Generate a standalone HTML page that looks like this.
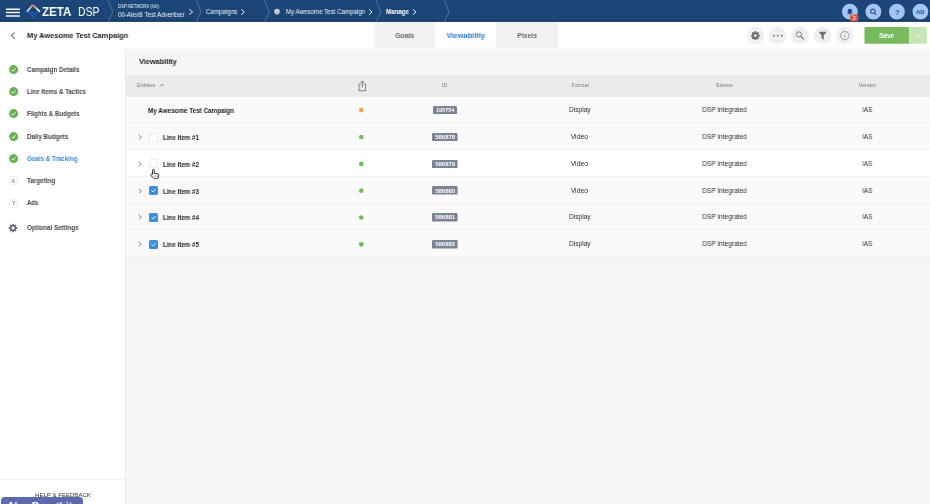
<!DOCTYPE html>
<html>
<head>
<meta charset="utf-8">
<style>
*{box-sizing:border-box;margin:0;padding:0}
html,body{width:930px;height:504px;overflow:hidden;background:#f6f6f6;font-family:"Liberation Sans",sans-serif;color:#222}
.abs{position:absolute}
.tx{position:absolute;white-space:nowrap;will-change:transform}
#nav{position:absolute;left:0;top:0;width:930px;height:22px;background:linear-gradient(to bottom,#1c4677 0,#1c4677 20px,#183a66 20px,#183a66 21px,#2e4a70 21px,#2e4a70 22px)}
#sub{position:absolute;left:0;top:22px;width:930px;height:27px;background:#fdfdfc}
.tab{position:absolute;top:22px;height:26px;background:#f1f2f3}
#side{position:absolute;left:0;top:49px;width:125px;height:455px;background:#fff}
#main{position:absolute;left:125px;top:49px;width:805px;height:455px;background:#f5f6f6;border-left:1px solid #ececed}
.hrow{position:absolute;left:126px;top:74.8px;width:804px;height:21.8px;background:#ebebec}
.row{position:absolute;left:126px;width:804px;border-bottom:1px solid #f1f1f2}
.dot{position:absolute;width:5px;height:5px;border-radius:50%}
.id{position:absolute;background:#747d8a;border-radius:1px}
.num{position:absolute;left:9px;width:9px;height:9px;border-radius:50%;border:1px solid #dcdde0}
</style>
</head>
<body>
<div id="nav"></div>
<div id="sub"></div>
<div id="side"></div>
<div id="main"></div>

<svg class="abs" style="left:0;top:0" width="930" height="22" viewBox="0 0 930 22">
  <g stroke="#f4f8fd" stroke-width="1.5" fill="none"><path d="M5.9 9.2H19.9M5.9 12.6H19.9M5.9 15.9H19.9"/></g>
  <defs>
    <linearGradient id="lgL" x1="27" y1="11.6" x2="32.7" y2="4.6" gradientUnits="userSpaceOnUse"><stop offset="0" stop-color="#b9d6fa"/><stop offset="0.4" stop-color="#dfe3ef"/><stop offset="0.7" stop-color="#dd9a98"/><stop offset="1" stop-color="#d07f80"/></linearGradient>
    <linearGradient id="lgR" x1="39.8" y1="11.6" x2="32.7" y2="4.6" gradientUnits="userSpaceOnUse"><stop offset="0" stop-color="#ffffff"/><stop offset="0.3" stop-color="#f6e4de"/><stop offset="0.65" stop-color="#e39b93"/><stop offset="1" stop-color="#d07f80"/></linearGradient>
  </defs>
  <path d="M27.4 11.9 H39.4 L32.6 17.9 Z" fill="#2250ad"/>
  <path d="M27 11.7 L32.7 4.8" stroke="url(#lgL)" stroke-width="1.8" fill="none"/>
  <path d="M39.9 11.7 L32.7 4.8" stroke="url(#lgR)" stroke-width="1.8" fill="none"/>
  <g stroke="#5a7ba6" stroke-width="0.8" fill="none">
    <path d="M108 0 L112.8 11.6 L108.4 21"/>
    <path d="M196.2 0 L201 11.6 L196.8 21"/>
    <path d="M264.2 0 L269.4 11.6 L264.8 21"/>
    <path d="M376 0 L380.8 11.6 L376.6 21"/>
    <path d="M444.2 0 L449 11.6 L444.8 21"/>
  </g>
  <g stroke="#e9eff7" stroke-width="0.95" fill="none">
    <path d="M189.2 9.2 L192.6 11.9 L189.2 14.6"/>
    <path d="M241.2 9.3 L244.4 12 L241.2 14.7"/>
    <path d="M369.1 9.4 L372 12 L369.1 14.7"/>
    <path d="M413 9.3 L416 12 L413 14.7"/>
  </g>
  <circle cx="277" cy="11.6" r="2.8" fill="#c6cbd4"/>
  <g fill="#a4c5f4"><circle cx="849.9" cy="11.7" r="7.9"/><circle cx="873.4" cy="11.7" r="7.9"/><circle cx="896.9" cy="11.7" r="7.9"/><circle cx="920.4" cy="11.7" r="7.9"/></g>
  <path d="M849.9 8.7 c-1.5 0 -2.2 1.1 -2.2 2.5 v1.5 l-0.8 1 h6 l-0.8 -1 v-1.5 c0 -1.4 -0.7 -2.5 -2.2 -2.5z M849.1 14.2 a0.8 0.8 0 0 0 1.6 0z" fill="#234d86"/>
  <rect x="850" y="14.3" width="8.3" height="7" rx="2.6" fill="#d8574f"/>
  <rect x="850.6" y="13.6" width="3.6" height="2" rx="1" fill="#e8a7a8" opacity="0.8"/>
  <circle cx="872.8" cy="11.3" r="2.2" stroke="#2a5691" stroke-width="1.1" fill="none"/>
  <path d="M874.4 12.9 L876.3 14.8" stroke="#2a5691" stroke-width="1.2"/>
</svg>
<div class="tx" style="left:42.30px;top:5px;font-size:12px;line-height:14px;font-weight:bold;color:#fff;transform:scaleX(0.9625);transform-origin:0 50%;">ZETA</div>
<div class="tx" style="left:77.70px;top:5px;font-size:12px;line-height:14px;font-weight:normal;color:#fff;transform:scaleX(0.8632);transform-origin:0 50%;">DSP</div>
<div class="tx" style="left:118.00px;top:4px;font-size:4.8px;line-height:5px;font-weight:normal;color:#eef3f9;transform:scaleX(0.8752);transform-origin:0 50%;">DSP NETWORK (NA)</div>
<div class="tx" style="left:118.00px;top:11px;font-size:6.6px;line-height:7px;font-weight:normal;color:#eef3f9;transform:scaleX(0.9306);transform-origin:0 50%;">00-AlexB Test Advertiser</div>
<div class="tx" style="left:205.90px;top:8px;font-size:6.6px;line-height:7px;font-weight:normal;color:#eef3f9;transform:scaleX(0.9406);transform-origin:0 50%;">Campaigns</div>
<div class="tx" style="left:285.75px;top:8px;font-size:6.6px;line-height:7px;font-weight:normal;color:#eef3f9;transform:scaleX(0.9338);transform-origin:0 50%;">My Awesome Test Campaign</div>
<div class="tx" style="left:385.80px;top:8px;font-size:6.6px;line-height:7px;font-weight:bold;color:#fff;transform:scaleX(0.9319);transform-origin:0 50%;">Manage</div>
<div class="tx" style="left:853.02px;top:16px;font-size:4.6px;line-height:5px;font-weight:bold;color:#ffe1b8;">2</div>
<div class="tx" style="left:894.52px;top:8px;font-size:7.8px;line-height:9px;font-weight:bold;color:#2f5d99;">?</div>
<div class="tx" style="left:916.07px;top:9px;font-size:6px;line-height:6px;font-weight:bold;color:#2a5691;transform:scaleX(0.9462);transform-origin:50% 50%;">AB</div>
<div class="tab" style="left:373.6px;width:61.2px"></div>
<div class="tab" style="left:496px;width:62px"></div>
<svg class="abs" style="left:0;top:22px" width="930" height="27" viewBox="0 22 930 27">
  <path d="M14.7 32.3 L11.4 35.6 L14.7 38.9" stroke="#6e6e6e" stroke-width="1.1" fill="none"/>
  <g fill="#eeeff1">
    <circle cx="755.4" cy="35.6" r="8.5"/><circle cx="777.8" cy="35.6" r="8.5"/><circle cx="800.3" cy="35.6" r="8.5"/><circle cx="822.5" cy="35.6" r="8.5"/><circle cx="844.8" cy="35.6" r="8.5"/>
  </g>
  <g transform="translate(755.4 35.6)">
    <g fill="#666a71">
      <circle r="3.2"/>
      <rect x="-0.95" y="-4.4" width="1.9" height="8.8" rx="0.3"/>
      <rect x="-0.95" y="-4.4" width="1.9" height="8.8" rx="0.3" transform="rotate(45)"/>
      <rect x="-0.95" y="-4.4" width="1.9" height="8.8" rx="0.3" transform="rotate(90)"/>
      <rect x="-0.95" y="-4.4" width="1.9" height="8.8" rx="0.3" transform="rotate(135)"/>
    </g>
    <circle r="1.5" fill="#eeeff1"/>
  </g>
  <g fill="#666"><circle cx="773.9" cy="35.7" r="0.85"/><circle cx="777.8" cy="35.7" r="0.85"/><circle cx="781.7" cy="35.7" r="0.85"/></g>
  <circle cx="798.9" cy="34.4" r="2.6" stroke="#6a6a6a" stroke-width="0.85" fill="none"/>
  <path d="M800.8 36.3 L804 39.4" stroke="#6a6a6a" stroke-width="1.05"/>
  <path d="M818.6 31.7 H826.7 L823.7 35.4 V39.8 L821.6 38.6 V35.4 Z" fill="#6a6d73"/>
  <circle cx="844.8" cy="35.6" r="4.2" stroke="#777" stroke-width="0.65" fill="none"/>
  <path d="M844.8 35 V37.9" stroke="#888" stroke-width="0.7"/><circle cx="844.8" cy="33.7" r="0.45" fill="#888"/>
  <rect x="864.5" y="27" width="46" height="16.8" rx="1.2" fill="#78bb5e"/>
  <path d="M908.9 27 H925.6 a1.2 1.2 0 0 1 1.2 1.2 V42.6 a1.2 1.2 0 0 1 -1.2 1.2 H908.9 Z" fill="#c6e5b9"/>
  <path d="M917 35.1 L918.4 36.4 L919.8 35.1" stroke="#f2faee" stroke-width="0.8" fill="none"/>
</svg>
<div class="tx" style="left:26.70px;top:31px;font-size:7.7px;line-height:9px;font-weight:bold;color:#1d1d1d;transform:scaleX(0.9636);transform-origin:0 50%;">My Awesome Test Campaign</div>
<div class="tx" style="left:393.70px;top:31px;font-size:7.7px;line-height:9px;font-weight:bold;color:#696969;transform:scaleX(0.9067);transform-origin:50% 50%;">Goals</div>
<div class="tx" style="left:445.77px;top:31px;font-size:7.7px;line-height:9px;font-weight:bold;color:#2f7fd6;transform:scaleX(0.9758);transform-origin:50% 50%;">Viewability</div>
<div class="tx" style="left:516.07px;top:31px;font-size:7.7px;line-height:9px;font-weight:bold;color:#696969;transform:scaleX(0.8849);transform-origin:50% 50%;">Pixels</div>
<div class="tx" style="left:879.11px;top:32px;font-size:6.5px;line-height:7px;font-weight:bold;color:#fff;transform:scaleX(0.9815);transform-origin:50% 50%;">Save</div>
<svg class="abs" style="left:8.70px;top:64.60px" width="9.2" height="9.2" viewBox="0 0 9.2 9.2"><circle cx="4.6" cy="4.6" r="4.5" fill="#67b353"/><path d="M2.6 4.7 L4 6.1 L6.7 3.3" stroke="#fff" stroke-width="1" fill="none"/></svg>
<div class="tx" style="left:26.80px;top:66px;font-size:6.5px;line-height:7px;font-weight:bold;color:#444;transform:scaleX(0.9625);transform-origin:0 50%;">Campaign Details</div>
<svg class="abs" style="left:8.70px;top:87.00px" width="9.2" height="9.2" viewBox="0 0 9.2 9.2"><circle cx="4.6" cy="4.6" r="4.5" fill="#67b353"/><path d="M2.6 4.7 L4 6.1 L6.7 3.3" stroke="#fff" stroke-width="1" fill="none"/></svg>
<div class="tx" style="left:26.80px;top:88px;font-size:6.5px;line-height:7px;font-weight:bold;color:#444;transform:scaleX(0.9427);transform-origin:0 50%;">Line Items &amp; Tactics</div>
<svg class="abs" style="left:8.70px;top:109.40px" width="9.2" height="9.2" viewBox="0 0 9.2 9.2"><circle cx="4.6" cy="4.6" r="4.5" fill="#67b353"/><path d="M2.6 4.7 L4 6.1 L6.7 3.3" stroke="#fff" stroke-width="1" fill="none"/></svg>
<div class="tx" style="left:26.80px;top:110px;font-size:6.5px;line-height:7px;font-weight:bold;color:#444;transform:scaleX(0.9441);transform-origin:0 50%;">Flights &amp; Budgets</div>
<svg class="abs" style="left:8.70px;top:131.90px" width="9.2" height="9.2" viewBox="0 0 9.2 9.2"><circle cx="4.6" cy="4.6" r="4.5" fill="#67b353"/><path d="M2.6 4.7 L4 6.1 L6.7 3.3" stroke="#fff" stroke-width="1" fill="none"/></svg>
<div class="tx" style="left:26.80px;top:133px;font-size:6.5px;line-height:7px;font-weight:bold;color:#444;transform:scaleX(0.9552);transform-origin:0 50%;">Daily Budgets</div>
<svg class="abs" style="left:8.70px;top:154.20px" width="9.2" height="9.2" viewBox="0 0 9.2 9.2"><circle cx="4.6" cy="4.6" r="4.5" fill="#67b353"/><path d="M2.6 4.7 L4 6.1 L6.7 3.3" stroke="#fff" stroke-width="1" fill="none"/></svg>
<div class="tx" style="left:26.80px;top:155px;font-size:6.5px;line-height:7px;font-weight:bold;color:#3a89de;transform:scaleX(0.9491);transform-origin:0 50%;">Goals &amp; Tracking</div>
<svg class="abs" style="left:8.70px;top:176.30px" width="9.2" height="9.2" viewBox="0 0 9.2 9.2"><circle cx="4.6" cy="4.6" r="4.1" fill="#fff" stroke="#e0e1e6" stroke-width="0.7"/></svg>
<div class="tx" style="left:11.85px;top:178px;font-size:5.2px;line-height:6px;font-weight:normal;color:#555;">6</div>
<div class="tx" style="left:26.80px;top:177px;font-size:6.5px;line-height:7px;font-weight:bold;color:#444;transform:scaleX(0.9646);transform-origin:0 50%;">Targeting</div>
<svg class="abs" style="left:8.70px;top:198.70px" width="9.2" height="9.2" viewBox="0 0 9.2 9.2"><circle cx="4.6" cy="4.6" r="4.1" fill="#fff" stroke="#e0e1e6" stroke-width="0.7"/></svg>
<div class="tx" style="left:11.85px;top:200px;font-size:5.2px;line-height:6px;font-weight:normal;color:#555;">7</div>
<div class="tx" style="left:26.80px;top:199px;font-size:6.5px;line-height:7px;font-weight:bold;color:#444;transform:scaleX(0.9039);transform-origin:0 50%;">Ads</div>
<svg class="abs" style="left:8.40px;top:222.70px" width="10" height="10" viewBox="-5 -5 10 10"><g fill="#6a707b"><circle r="3.1"/><rect x="-0.95" y="-4.3" width="1.9" height="8.6" rx="0.3"/><rect x="-0.95" y="-4.3" width="1.9" height="8.6" rx="0.3" transform="rotate(45)"/><rect x="-0.95" y="-4.3" width="1.9" height="8.6" rx="0.3" transform="rotate(90)"/><rect x="-0.95" y="-4.3" width="1.9" height="8.6" rx="0.3" transform="rotate(135)"/></g><circle r="1.4" fill="#fff"/></svg>
<div class="tx" style="left:26.80px;top:224px;font-size:6.5px;line-height:7px;font-weight:bold;color:#444;transform:scaleX(0.9571);transform-origin:0 50%;">Optional Settings</div>
<div class="abs" style="left:0;top:479px;width:125px;height:1px;background:#f1f2f3"></div>
<div class="tx" style="left:34.70px;top:492px;font-size:6px;line-height:6px;font-weight:normal;color:#333;transform:scaleX(1.0119);transform-origin:0 50%;">HELP &amp; FEEDBACK</div>
<div class="abs" style="left:0;top:497px;width:100px;height:7px;overflow:hidden"><div class="abs" style="left:1px;top:0.3px;width:82.4px;height:10px;background:#5e69ae;border-radius:3.5px 3.5px 0 0"></div><div class="tx" style="left:6.80px;top:3px;font-size:11.1px;line-height:12px;font-weight:bold;color:#fff;transform:scaleX(0.9356);transform-origin:0 50%;">Alex Brunthit</div></div>
<div class="tx" style="left:138.60px;top:57px;font-size:7.9px;line-height:9px;font-weight:bold;color:#1d1d1d;transform:scaleX(0.9290);transform-origin:0 50%;">Viewability</div>
<div class="hrow"></div>
<div class="tx" style="left:137.20px;top:82px;font-size:5.3px;line-height:6px;font-weight:normal;color:#777;transform:scaleX(1.0414);transform-origin:0 50%;">Entities</div>
<svg class="abs" style="left:158.8px;top:83.4px" width="6" height="4" viewBox="0 0 6 4"><path d="M1 3.2 L3 1.2 L5 3.2" stroke="#3b7fd0" stroke-width="0.8" fill="none"/></svg>
<svg class="abs" style="left:357px;top:79.6px" width="10.4" height="12" viewBox="357 79.6 10.4 12"><path d="M360.7 83.7 H359 V90.4 H365.6 V83.7 H363.9 M362.3 87.4 V80.7 M360.7 82.3 L362.3 80.7 L363.9 82.3" stroke="#555b66" stroke-width="0.75" fill="none"/></svg>
<div class="tx" style="left:442.05px;top:82px;font-size:5.3px;line-height:6px;font-weight:normal;color:#777;transform:scaleX(1.0189);transform-origin:50% 50%;">ID</div>
<div class="tx" style="left:571.61px;top:82px;font-size:5.3px;line-height:6px;font-weight:normal;color:#777;transform:scaleX(1.0187);transform-origin:50% 50%;">Format</div>
<div class="tx" style="left:715.70px;top:82px;font-size:5.3px;line-height:6px;font-weight:normal;color:#777;transform:scaleX(1.0242);transform-origin:50% 50%;">Source</div>
<div class="tx" style="left:858.50px;top:82px;font-size:5.3px;line-height:6px;font-weight:normal;color:#777;transform:scaleX(1.0596);transform-origin:50% 50%;">Vendor</div>
<div class="row" style="top:96.6px;height:26.4px;background:#fafafa"></div>
<div class="tx" style="left:148.10px;top:107px;font-size:6.6px;line-height:7px;font-weight:bold;color:#1d1d1d;transform:scaleX(0.9545);transform-origin:0 50%;">My Awesome Test Campaign</div>
<svg class="abs" style="left:358px;top:107px" width="7" height="7" viewBox="358 107 7 7"><circle cx="361.3" cy="110.1" r="2.35" fill="#f0a24f"/></svg>
<svg class="abs" style="left:433.00px;top:105.80px" width="24" height="8.6"><rect width="24" height="8.6" rx="1.2" fill="#7b8494"/></svg>
<div class="tx" style="left:435.82px;top:107px;font-size:5.5px;line-height:6px;font-weight:bold;color:#fff;transform:scaleX(0.9807);transform-origin:50% 50%;">195754</div>
<div class="tx" style="left:568.88px;top:106px;font-size:6.6px;line-height:7px;font-weight:normal;color:#2b2b2b;">Display</div>
<div class="tx" style="left:701.60px;top:106px;font-size:6.6px;line-height:7px;font-weight:normal;color:#2b2b2b;transform:scaleX(0.9842);transform-origin:50% 50%;">DSP Integrated</div>
<div class="tx" style="left:861.68px;top:106px;font-size:6.6px;line-height:7px;font-weight:normal;color:#2b2b2b;transform:scaleX(0.9400);transform-origin:50% 50%;">IAS</div>
<div class="row" style="top:123px;height:27.0px;background:#fafafa"></div>
<svg class="abs" style="left:137.6px;top:133.8px" width="5" height="6.4" viewBox="0 0 5 6.4"><path d="M0.8 0.8 L3.3 3.2 L0.8 5.6" stroke="#6b6f78" stroke-width="0.85" fill="none"/></svg>
<svg class="abs" style="left:149.1px;top:132.5px" width="9" height="9" viewBox="0 0 9 9"><rect x="0.4" y="0.4" width="8.2" height="8.2" rx="1.4" fill="#fff" stroke="#e1e2e6" stroke-width="0.8"/></svg>
<div class="tx" style="left:162.60px;top:134px;font-size:6.6px;line-height:7px;font-weight:bold;color:#1d1d1d;transform:scaleX(0.9411);transform-origin:0 50%;">Line Item #1</div>
<svg class="abs" style="left:358px;top:134px" width="7" height="7" viewBox="358 134 7 7"><circle cx="361.3" cy="137" r="2.35" fill="#6cbd55"/></svg>
<svg class="abs" style="left:432.20px;top:132.70px" width="25.6" height="8.6"><rect width="25.6" height="8.6" rx="1.2" fill="#7b8494"/></svg>
<div class="tx" style="left:435.82px;top:134px;font-size:5.5px;line-height:6px;font-weight:bold;color:#fff;transform:scaleX(1.0897);transform-origin:50% 50%;">586878</div>
<div class="tx" style="left:571.32px;top:133px;font-size:6.6px;line-height:7px;font-weight:normal;color:#2b2b2b;transform:scaleX(1.0381);transform-origin:50% 50%;">Video</div>
<div class="tx" style="left:701.60px;top:133px;font-size:6.6px;line-height:7px;font-weight:normal;color:#2b2b2b;transform:scaleX(0.9842);transform-origin:50% 50%;">DSP Integrated</div>
<div class="tx" style="left:861.68px;top:133px;font-size:6.6px;line-height:7px;font-weight:normal;color:#2b2b2b;transform:scaleX(0.9400);transform-origin:50% 50%;">IAS</div>
<div class="row" style="top:150px;height:26.8px;background:#fefefe"></div>
<svg class="abs" style="left:137.6px;top:160.7px" width="5" height="6.4" viewBox="0 0 5 6.4"><path d="M0.8 0.8 L3.3 3.2 L0.8 5.6" stroke="#6b6f78" stroke-width="0.85" fill="none"/></svg>
<svg class="abs" style="left:149.1px;top:159.4px" width="9" height="9" viewBox="0 0 9 9"><rect x="0.4" y="0.4" width="8.2" height="8.2" rx="1.4" fill="#fff" stroke="#e1e2e6" stroke-width="0.8"/></svg>
<div class="tx" style="left:162.60px;top:161px;font-size:6.6px;line-height:7px;font-weight:bold;color:#1d1d1d;transform:scaleX(0.9411);transform-origin:0 50%;">Line Item #2</div>
<svg class="abs" style="left:358px;top:160px" width="7" height="7" viewBox="358 160 7 7"><circle cx="361.3" cy="163.9" r="2.35" fill="#6cbd55"/></svg>
<svg class="abs" style="left:432.20px;top:159.60px" width="25.6" height="8.6"><rect width="25.6" height="8.6" rx="1.2" fill="#7b8494"/></svg>
<div class="tx" style="left:435.82px;top:161px;font-size:5.5px;line-height:6px;font-weight:bold;color:#fff;transform:scaleX(1.0897);transform-origin:50% 50%;">586879</div>
<div class="tx" style="left:571.32px;top:160px;font-size:6.6px;line-height:7px;font-weight:normal;color:#2b2b2b;transform:scaleX(1.0381);transform-origin:50% 50%;">Video</div>
<div class="tx" style="left:701.60px;top:160px;font-size:6.6px;line-height:7px;font-weight:normal;color:#2b2b2b;transform:scaleX(0.9842);transform-origin:50% 50%;">DSP Integrated</div>
<div class="tx" style="left:861.68px;top:160px;font-size:6.6px;line-height:7px;font-weight:normal;color:#2b2b2b;transform:scaleX(0.9400);transform-origin:50% 50%;">IAS</div>
<div class="row" style="top:176.8px;height:26.8px;background:#fafafa"></div>
<svg class="abs" style="left:137.6px;top:187.5px" width="5" height="6.4" viewBox="0 0 5 6.4"><path d="M0.8 0.8 L3.3 3.2 L0.8 5.6" stroke="#6b6f78" stroke-width="0.85" fill="none"/></svg>
<svg class="abs" style="left:149.1px;top:186.2px" width="9" height="9" viewBox="0 0 9 9"><rect width="9" height="9" rx="1.6" fill="#3d8de0"/><path d="M2.6 4.6 L3.9 5.9 L6.5 3.2" stroke="#fff" stroke-width="0.9" fill="none"/></svg>
<div class="tx" style="left:162.60px;top:188px;font-size:6.6px;line-height:7px;font-weight:bold;color:#1d1d1d;transform:scaleX(0.9411);transform-origin:0 50%;">Line Item #3</div>
<svg class="abs" style="left:358px;top:187px" width="7" height="7" viewBox="358 187 7 7"><circle cx="361.3" cy="190.7" r="2.35" fill="#6cbd55"/></svg>
<svg class="abs" style="left:432.20px;top:186.40px" width="25.6" height="8.6"><rect width="25.6" height="8.6" rx="1.2" fill="#7b8494"/></svg>
<div class="tx" style="left:435.82px;top:188px;font-size:5.5px;line-height:6px;font-weight:bold;color:#fff;transform:scaleX(1.0897);transform-origin:50% 50%;">586880</div>
<div class="tx" style="left:571.32px;top:187px;font-size:6.6px;line-height:7px;font-weight:normal;color:#2b2b2b;transform:scaleX(1.0381);transform-origin:50% 50%;">Video</div>
<div class="tx" style="left:701.60px;top:187px;font-size:6.6px;line-height:7px;font-weight:normal;color:#2b2b2b;transform:scaleX(0.9842);transform-origin:50% 50%;">DSP Integrated</div>
<div class="tx" style="left:861.68px;top:187px;font-size:6.6px;line-height:7px;font-weight:normal;color:#2b2b2b;transform:scaleX(0.9400);transform-origin:50% 50%;">IAS</div>
<div class="row" style="top:203.6px;height:26.8px;background:#fafafa"></div>
<svg class="abs" style="left:137.6px;top:214.3px" width="5" height="6.4" viewBox="0 0 5 6.4"><path d="M0.8 0.8 L3.3 3.2 L0.8 5.6" stroke="#6b6f78" stroke-width="0.85" fill="none"/></svg>
<svg class="abs" style="left:149.1px;top:213.0px" width="9" height="9" viewBox="0 0 9 9"><rect width="9" height="9" rx="1.6" fill="#3d8de0"/><path d="M2.6 4.6 L3.9 5.9 L6.5 3.2" stroke="#fff" stroke-width="0.9" fill="none"/></svg>
<div class="tx" style="left:162.60px;top:214px;font-size:6.6px;line-height:7px;font-weight:bold;color:#1d1d1d;transform:scaleX(0.9411);transform-origin:0 50%;">Line Item #4</div>
<svg class="abs" style="left:358px;top:214px" width="7" height="7" viewBox="358 214 7 7"><circle cx="361.3" cy="217.5" r="2.35" fill="#6cbd55"/></svg>
<svg class="abs" style="left:432.20px;top:213.20px" width="25.6" height="8.6"><rect width="25.6" height="8.6" rx="1.2" fill="#7b8494"/></svg>
<div class="tx" style="left:435.82px;top:214px;font-size:5.5px;line-height:6px;font-weight:bold;color:#fff;transform:scaleX(1.0897);transform-origin:50% 50%;">586881</div>
<div class="tx" style="left:568.88px;top:213px;font-size:6.6px;line-height:7px;font-weight:normal;color:#2b2b2b;">Display</div>
<div class="tx" style="left:701.60px;top:213px;font-size:6.6px;line-height:7px;font-weight:normal;color:#2b2b2b;transform:scaleX(0.9842);transform-origin:50% 50%;">DSP Integrated</div>
<div class="tx" style="left:861.68px;top:213px;font-size:6.6px;line-height:7px;font-weight:normal;color:#2b2b2b;transform:scaleX(0.9400);transform-origin:50% 50%;">IAS</div>
<div class="row" style="top:230.4px;height:26.6px;background:#fafafa"></div>
<svg class="abs" style="left:137.6px;top:241.1px" width="5" height="6.4" viewBox="0 0 5 6.4"><path d="M0.8 0.8 L3.3 3.2 L0.8 5.6" stroke="#6b6f78" stroke-width="0.85" fill="none"/></svg>
<svg class="abs" style="left:149.1px;top:239.8px" width="9" height="9" viewBox="0 0 9 9"><rect width="9" height="9" rx="1.6" fill="#3d8de0"/><path d="M2.6 4.6 L3.9 5.9 L6.5 3.2" stroke="#fff" stroke-width="0.9" fill="none"/></svg>
<div class="tx" style="left:162.60px;top:241px;font-size:6.6px;line-height:7px;font-weight:bold;color:#1d1d1d;transform:scaleX(0.9411);transform-origin:0 50%;">Line Item #5</div>
<svg class="abs" style="left:358px;top:241px" width="7" height="7" viewBox="358 241 7 7"><circle cx="361.3" cy="244.3" r="2.35" fill="#6cbd55"/></svg>
<svg class="abs" style="left:432.20px;top:240.00px" width="25.6" height="8.6"><rect width="25.6" height="8.6" rx="1.2" fill="#7b8494"/></svg>
<div class="tx" style="left:435.82px;top:241px;font-size:5.5px;line-height:6px;font-weight:bold;color:#fff;transform:scaleX(1.0897);transform-origin:50% 50%;">586882</div>
<div class="tx" style="left:568.88px;top:240px;font-size:6.6px;line-height:7px;font-weight:normal;color:#2b2b2b;">Display</div>
<div class="tx" style="left:701.60px;top:240px;font-size:6.6px;line-height:7px;font-weight:normal;color:#2b2b2b;transform:scaleX(0.9842);transform-origin:50% 50%;">DSP Integrated</div>
<div class="tx" style="left:861.68px;top:240px;font-size:6.6px;line-height:7px;font-weight:normal;color:#2b2b2b;transform:scaleX(0.9400);transform-origin:50% 50%;">IAS</div>
<svg class="abs" style="left:150px;top:169px" width="10" height="10.4" viewBox="-0.5 -0.5 10 11" preserveAspectRatio="none"><path d="M2 0.9 a0.9 0.9 0 0 1 1.8 0 V3.9 l3.6 0.9 a1.2 1.2 0 0 1 0.9 1.4 L7.7 9 a1 1 0 0 1 -1 0.8 H3.6 L0.4 6.3 a0.9 0.9 0 0 1 1.3 -1.2 l0.3 0.3 Z" fill="#f2f2f2" stroke="#222" stroke-width="0.95" stroke-linejoin="round"/><path d="M4.4 6.4 V8.2 M5.6 6.4 V8.2 M6.8 6.4 V8.2" stroke="#555" stroke-width="0.4"/></svg>
</body>
</html>
